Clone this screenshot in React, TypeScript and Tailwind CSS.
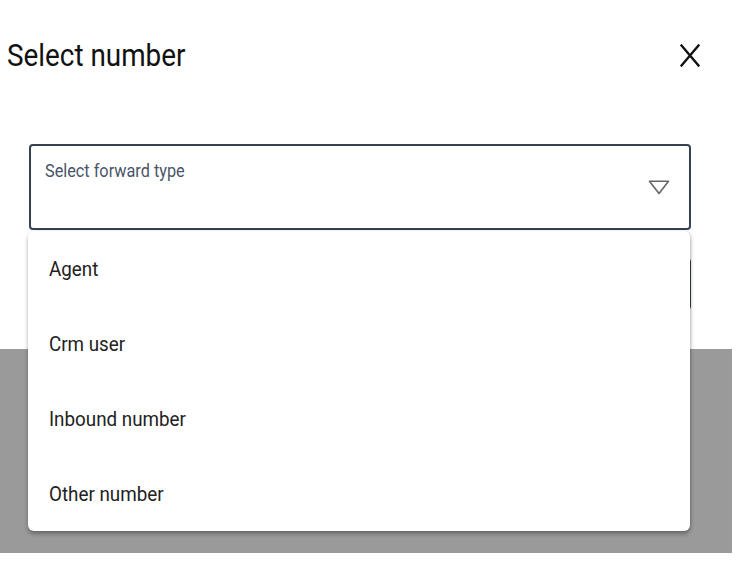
import { useState } from "react"

const options = ["Agent", "Crm user", "Inbound number", "Other number"]

const CloseIcon = () => (
  <svg width="20" height="23" viewBox="0 0 20 23" fill="none">
    <path d="M1.5 1.5L18.5 21.5M18.5 1.5L1.5 21.5" stroke="#111" strokeWidth="2.4" strokeLinecap="square" />
  </svg>
)

const TriangleIcon = () => (
  <svg width="22" height="15" viewBox="0 0 22 15" fill="none">
    <path d="M1.5 1.2H20.5L11 13.5Z" stroke="#666" strokeWidth="1.6" strokeLinejoin="round" />
  </svg>
)

export default function App() {
  const [open] = useState(true)

  return (
    <div className="relative flex h-[553px] w-[732px] flex-col font-['Roboto',sans-serif]">
      <div className="flex h-[349px] flex-col bg-white">
        {/* header */}
        <div className="mt-[35px] flex h-[40px] items-center justify-between pl-[7px] pr-[32px]">
          <span className="inline-block origin-left scale-x-[0.87] text-[32px] leading-[40px] text-[#111]">
            Select number
          </span>
          <button type="button" className="flex items-center">
            <CloseIcon />
          </button>
        </div>

        {/* forward type select */}
        <div className="ml-[29px] mt-[69px] flex h-[86px] w-[662px] justify-between rounded-[4px] border-2 border-[#364152]">
          <div className="self-start pl-[14px] pt-[13px]">
            <span className="inline-block origin-left scale-x-[0.87] text-[18.7px] leading-[24px] text-[#4a5568]">
              Select forward type
            </span>
          </div>
          <span className="mr-[19px] mt-[1px] self-center">
            <TriangleIcon />
          </span>
        </div>

        {/* second field, hidden behind the menu */}
        <div className="ml-[29px] mt-[28px] h-[52px] w-[662px] rounded-[4px] border-2 border-[#364152]" />
      </div>

      <div className="flex-1 bg-[#9a9a9a]" />

      {open && (
        <ul className="absolute left-[28px] top-[231px] w-[662px] rounded-md bg-white shadow-[0_3px_4px_rgba(0,0,0,0.3),1px_0_3px_rgba(0,0,0,0.12)]">
          {options.map((o) => (
            <li key={o} className="flex h-[75px] items-center px-[21px]">
              <span className="inline-block origin-left scale-x-[0.94] text-[20px] leading-[24px] text-[#222]">
                {o}
              </span>
            </li>
          ))}
        </ul>
      )}
    </div>
  )
}
